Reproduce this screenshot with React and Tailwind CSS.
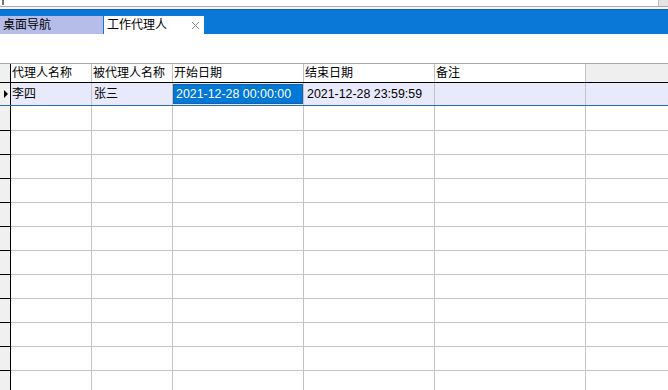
import React from 'react';

const cols = [
  { w: 'w-[81px]', label: '代理人名称' },
  { w: 'w-[81px]', label: '被代理人名称' },
  { w: 'w-[131px]', label: '开始日期' },
  { w: 'w-[131px]', label: '结束日期' },
  { w: 'w-[151px]', label: '备注' },
];

const font = { fontFamily: '"Liberation Sans", "Noto Sans CJK SC", sans-serif' };

function EmptyRow({ h }) {
  return (
    <div className={`flex ${h} box-border border-b border-[#c4c4c4]`}>
      <div className="w-[11px] shrink-0 -mb-px border-b border-r border-black bg-[#f0f0f0]"></div>
      {cols.map((c, i) => (
        <div key={i} className={`${c.w} shrink-0 border-r border-[#c4c4c4]`}></div>
      ))}
      <div className="flex-1"></div>
    </div>
  );
}

export default function App() {
  const rows = Array.from({ length: 11 });
  return (
    <div className="w-[668px] h-[390px] overflow-hidden bg-white text-[12px] text-black" style={font}>
      {/* top strip */}
      <div className="relative h-[7px] border-b border-[#a9a9a9]">
        <div className="absolute left-[2px] top-0 w-[2px] h-[5px] bg-[#777]"></div>
        <div className="absolute right-0 top-0 w-[10px] h-[6px] bg-[#e4e4e4] border-l border-[#bbb]"></div>
      </div>
      <div className="h-[2px] bg-[#f4f4f4]"></div>
      {/* tab bar */}
      <div className="h-[25px] bg-[#0a78d6] border-t border-[#1662b0] flex items-end">
        <div className="w-[103px] h-[18px] bg-[#b6bde8] pl-[3px] leading-[18px]">桌面导航</div>
        <div className="ml-[1px] w-[100px] h-[18px] bg-white pl-[3px] leading-[18px] flex items-center">
          <span>工作代理人</span>
          <svg className="ml-auto mr-[4px]" width="9" height="9" viewBox="0 0 9 9">
            <path d="M1 1L8 8M8 1L1 8" stroke="#8a8a8a" strokeWidth="1" fill="none" />
          </svg>
        </div>
      </div>
      <div className="h-[29px]"></div>
      {/* grid header */}
      <div className="flex h-[20px] box-border border-t border-b border-t-[#a9a9a9] border-b-black">
        <div className="w-[11px] shrink-0 border-r border-black bg-[#f0f0f0]"></div>
        {cols.map((c, i) => (
          <div key={i} className={`${c.w} shrink-0 border-r border-[#c4c4c4] pl-[1px] leading-[18px] whitespace-nowrap overflow-hidden`}>
            {c.label}
          </div>
        ))}
        <div className="flex-1 bg-[#efefef]"></div>
      </div>
      {/* first row */}
      <div className="flex h-[23px] box-border border-b border-[#2d6cb5] bg-[#e8e9fa]">
        <div className="w-[11px] shrink-0 border-r border-black bg-[#f0f0f0] flex items-center pl-[4px]">
          <div className="w-0 h-0 border-y-[4px] border-y-transparent border-l-[4px] border-l-black"></div>
        </div>
        <div className="w-[81px] shrink-0 border-r border-[#c4c4c4] pl-[1px] leading-[22px]">李四</div>
        <div className="w-[81px] shrink-0 border-r border-[#c4c4c4] pl-[2px] leading-[22px]">张三</div>
        <div className="w-[131px] shrink-0 border-r border-[#c4c4c4] py-[1px]">
          <div className="h-full bg-[#0078d7] border border-[#1a5fa8] text-white text-[12.4px] pl-[2px] leading-[18px]">
            2021-12-28 00:00:00
          </div>
        </div>
        <div className="w-[131px] shrink-0 border-r border-[#c4c4c4] pl-[3px] leading-[22px] text-[12.4px]">2021-12-28 23:59:59</div>
        <div className="w-[151px] shrink-0 border-r border-[#c4c4c4]"></div>
        <div className="flex-1"></div>
      </div>
      <EmptyRow h="h-[25px]" />
      {rows.map((_, i) => (
        <EmptyRow key={i} h="h-[24px]" />
      ))}
    </div>
  );
}
